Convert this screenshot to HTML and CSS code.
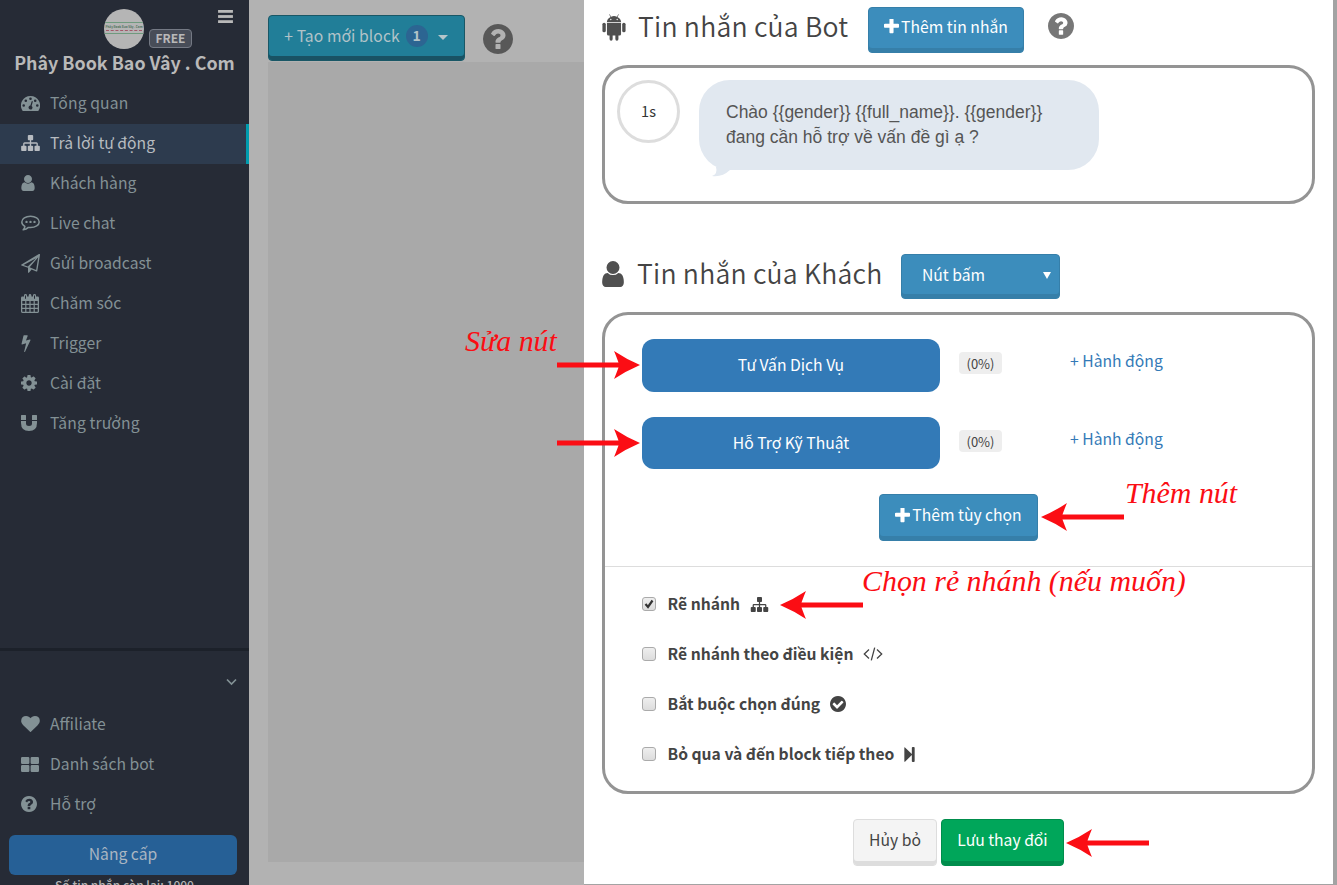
FILE: index.html
```html
<!DOCTYPE html>
<html lang="vi">
<head>
<meta charset="utf-8">
<title>Phây Book Bao Vây . Com</title>
<link rel="stylesheet" href="styles.css">
</head>
<body>
<svg class="defs" width="0" height="0">
  <symbol id="user" viewBox="256 128 1280 1536"><path d="M1536 1399q0 109-62.500 187t-150.500 78h-854q-88 0-150.500-78t-62.500-187q0-85 8.500-160.500t31.500-152 58.500-131 94-89 134.500-34.500q131 128 313 128t313-128q76 0 134.500 34.500t94 89 58.500 131 31.500 152 8.500 160.500zm-256-887q0 159-112.500 271.500t-271.500 112.500-271.500-112.500-112.500-271.500 112.500-271.500 271.500-112.500 271.500 112.500 112.500 271.500z"/></symbol>
  <symbol id="sitemap" viewBox="0 128 1792 1536"><path d="M1792 1248v320q0 40-28 68t-68 28h-320q-40 0-68-28t-28-68v-320q0-40 28-68t68-28h96v-192h-512v192h96q40 0 68 28t28 68v320q0 40-28 68t-68 28h-320q-40 0-68-28t-28-68v-320q0-40 28-68t68-28h96v-192h-512v192h96q40 0 68 28t28 68v320q0 40-28 68t-68 28h-320q-40 0-68-28t-28-68v-320q0-40 28-68t68-28h96v-192q0-52 38-90t90-38h512v-192h-96q-40 0-68-28t-28-68v-320q0-40 28-68t68-28h320q40 0 68 28t28 68v320q0 40-28 68t-68 28h-96v192h512q52 0 90 38t38 90v192h96q40 0 68 28t28 68z"/></symbol>
  <symbol id="heart" viewBox="0 128 1792 1536"><path d="M896 1664q-26 0-44-18l-624-602q-10-8-27.500-26t-55.500-65.500-68-97.500-53.500-121-23.500-138q0-220 127-344t351-124q62 0 126.500 21.500t120 58 95.500 68.500 76 68q36-36 76-68t95.500-68.500 120-58 126.500-21.500q224 0 351 124t127 344q0 221-229 450l-623 600q-18 18-44 18z"/></symbol>
  <symbol id="question" viewBox="128 128 1536 1536"><path d="M1024 1376v-192q0-14-9-23t-23-9h-192q-14 0-23 9t-9 23v192q0 14 9 23t23 9h192q14 0 23-9t9-23zm256-672q0-88-55.500-163t-138.500-116-170-41q-243 0-371 213-15 24 8 42l132 100q7 6 19 6 16 0 25-12 53-68 86-92 34-24 86-24 48 0 85.500 26t37.500 59q0 38-20 61t-68 45q-63 28-115.500 86.500t-52.500 125.500v36q0 14 9 23t23 9h192q14 0 23-9t9-23q0-19 21.500-49.500t54.500-49.500q32-18 49-28.500t46-35 44.500-48 28-60.500 12.500-81zm384 192q0 209-103 385.500t-279.500 279.500-385.500 103-385.500-103-279.500-279.500-103-385.500 103-385.500 279.500-279.500 385.500-103 385.500 103 279.500 279.500 103 385.500z"/></symbol>
  <symbol id="check" viewBox="128 128 1536 1536"><path d="M1412 734q0-28-18-46l-91-90q-19-19-45-19t-45 19l-408 407-226-226q-19-19-45-19t-45 19l-91 90q-18 18-18 46 0 27 18 45l362 362q19 19 45 19 27 0 46-19l543-543q18-18 18-45zm252 162q0 209-103 385.500t-279.500 279.500-385.500 103-385.500-103-279.500-279.500-103-385.500 103-385.500 279.500-279.500 385.500-103 385.500 103 279.500 279.500 103 385.500z"/></symbol>
  <symbol id="cog" viewBox="128 128 1536 1536"><path d="M1152 896q0-106-75-181t-181-75-181 75-75 181 75 181 181 75 181-75 75-181zm512-109v222q0 12-8 23t-20 13l-185 28q-19 54-39 91 35 50 107 138 10 12 10 25t-9 23q-27 37-99 108t-94 71q-12 0-26-9l-138-108q-44 23-91 38-16 136-29 186-7 28-36 28h-222q-14 0-24.500-8.500t-11.500-21.500l-28-184q-49-16-90-37l-141 107q-10 9-25 9-14 0-25-11-126-114-165-168-7-10-7-23 0-12 8-23 15-21 51-66.500t54-70.500q-27-50-41-99l-183-27q-13-2-21-12.500t-8-23.500v-222q0-12 8-23t19-13l186-28q14-46 39-92-40-57-107-138-10-12-10-24 0-10 9-23 26-36 98.500-107.500t94.500-71.500q13 0 26 10l138 107q44-23 91-38 16-136 29-186 7-28 36-28h222q14 0 24.500 8.500t11.500 21.500l28 184q49 16 90 37l142-107q9-9 24-9 13 0 25 10 129 119 165 170 7 8 7 22 0 12-8 23-15 21-51 66.500t-54 70.500q26 50 41 98l183 28q13 2 21 12.500t8 23.500z"/></symbol>
  <symbol id="plus" viewBox="192 192 1408 1408"><path d="M1600 736v192q0 40-28 68t-68 28h-416v416q0 40-28 68t-68 28h-192q-40 0-68-28t-28-68v-416h-416q-40 0-68-28t-28-68v-192q0-40 28-68t68-28h416v-416q0-40 28-68t68-28h192q40 0 68 28t28 68v416h416q40 0 68 28t28 68z"/></symbol>
  <symbol id="bolt" viewBox="448 0 896 1792"><path d="M1333 566q18 20 7 44l-540 1157q-13 25-42 25-4 0-14-2-17-5-25.500-19t-4.500-30l197-808-406 101q-4 1-12 1-18 0-31-11-18-15-13-39l201-825q4-14 16-23t28-9h328q19 0 32 12.500t13 29.500q0 8-5 18l-171 463 396-98q8-2 12-2 19 0 34 15z"/></symbol>
  <symbol id="gauge" viewBox="0 0 19 15"><path fill-rule="evenodd" d="M9.500 0A9.500 9.500 0 0 0 1.400 14.500q.3.500.9.500h14.400q.6 0 .9-.5A9.500 9.500 0 0 0 9.500 0zM2.700 8.200a1.300 1.300 0 1 0 0 2.600 1.300 1.300 0 0 0 0-2.600zM4.800 3.500a1.300 1.300 0 1 0 0 2.600 1.300 1.300 0 0 0 0-2.600zM9.500 1.500a1.300 1.300 0 1 0 0 2.600 1.300 1.300 0 0 0 0-2.600zM14.200 3.500a1.300 1.300 0 1 0 0 2.600 1.300 1.300 0 0 0 0-2.600zM16.300 8.200a1.300 1.300 0 1 0 0 2.600 1.300 1.300 0 0 0 0-2.600zM10.600 5.400l-1.200 4.200a2 2 0 1 0 1.200.3l1.200-4.100q0-.8-.6-.9-.4 0-.6.500z"/></symbol>
  <symbol id="comment" viewBox="0 0 19 16"><path fill="none" stroke="currentColor" stroke-width="1.500" stroke-linejoin="round" d="M9.500 1.200c4.900 0 8.700 2.500 8.700 5.700s-3.800 5.700-8.700 5.700q-1.100 0-2.100-.2Q5.300 14.300 2.200 14.800q1.600-1.500 1.700-3.500C2 10.200.8 8.700.8 6.900c0-3.200 3.800-5.700 8.700-5.700z"/><circle cx="5.500" cy="6.900" r="1.200"/><circle cx="9.500" cy="6.900" r="1.200"/><circle cx="13.500" cy="6.900" r="1.200"/></symbol>
  <symbol id="plane" viewBox="0 0 19 19"><path fill-rule="evenodd" d="M18.700.1q.4.300.3.800l-2.700 16q-.2.800-1 .5l-4.700-1.900-2.500 3.100q-.3.400-.7.200-.4-.1-.4-.6v-4.400L.5 11.600q-.9-.5 0-1.200L17.900.1q.4-.2.800 0zM2.600 10.900l4.200 1.700 8.300-8.300zM15.100 15.900L17.200 3.300 8.600 13.200z"/></symbol>
  <symbol id="calendar" viewBox="0 0 18 19"><path fill-rule="evenodd" d="M1.300 2.600H3V1.400Q3 0 4.500 0T6 1.400v1.200h1.700V1.400Q7.700 0 9 0t1.400 1.400v1.200H12V1.400Q12 0 13.500 0T15 1.400v1.200h1.700Q18 2.600 18 4v13.600q0 1.400-1.300 1.400H1.300Q0 19 0 17.600V4q0-1.400 1.300-1.400zM4 1.500v3.300h1V1.500zm9 0v3.300h1V1.500zM1.300 7v2.800h2.900V7zm4.100 0v2.800h3V7zm4.200 0v2.800h3V7zm4.200 0v2.800h2.900V7zM1.300 11v2.800h2.900V11zm4.100 0v2.800h3V11zm4.200 0v2.800h3V11zm4.200 0v2.800h2.900V11zM1.300 15v2.800h2.900V15zm4.100 0v2.800h3V15zm4.200 0v2.800h3V15zm4.200 0v2.800h2.900V15z"/></symbol>
  <symbol id="magnet" viewBox="0 0 16 16"><path d="M0 6h5v2.500Q5 11 8 11t3-2.500V6h5v2q0 8-8 8T0 8zM.6 0h3.800q.6 0 .6.600V5H0V.6Q0 0 .6 0zM11.600 0h3.800q.6 0 .6.600V5h-5V.6q0-.6.600-.6z"/></symbol>
  <symbol id="tiles" viewBox="0 0 18 15"><path d="M1.200 0h6q1.200 0 1.200 1.200v4.600Q8.400 7 7.200 7h-6Q0 7 0 5.800V1.200Q0 0 1.200 0zM10.800 0h6Q18 0 18 1.200v4.600Q18 7 16.800 7h-6Q9.600 7 9.600 5.800V1.200q0-1.200 1.200-1.200zM1.200 8h6q1.200 0 1.200 1.200v4.600q0 1.200-1.200 1.200h-6Q0 15 0 13.800V9.200Q0 8 1.200 8zM10.800 8h6Q18 8 18 9.200v4.600q0 1.200-1.200 1.200h-6q-1.200 0-1.200-1.200V9.200Q9.600 8 10.800 8z"/></symbol>
  <symbol id="android" viewBox="0 0 24 28"><path fill-rule="evenodd" d="M4.600 8.500C4.800 6 6.200 4.200 8.400 3.100L7 .6q0-.4.500-.3l1.500 2.500q3-1.200 6 0L16.500.3q.5-.1.500.3l-1.400 2.500c2.200 1.100 3.600 2.900 3.800 5.400zM8.700 5a.7.700 0 1 0 0 1.400.7.700 0 0 0 0-1.400zm6.600 0a.7.700 0 1 0 0 1.400.7.700 0 0 0 0-1.400zM4.700 9.300h14.600v11.500q0 1.600-1.600 1.600h-1.100V26q0 1.700-1.600 1.700T13.400 26v-3.600h-2.800V26q0 1.700-1.600 1.700T7.400 26v-3.600H6.300q-1.600 0-1.600-1.600z"/><rect x="0" y="9" width="3.500" height="10" rx="1.700"/><rect x="20.500" y="9" width="3.500" height="10" rx="1.700"/></symbol>
  <symbol id="code" viewBox="0 0 20 14"><path fill="none" stroke="currentColor" stroke-width="1.300" d="M6 2.500L1.300 7 6 11.500M14 2.500L18.700 7 14 11.500M11.700.7L8.300 13.300"/></symbol>
  <symbol id="step" viewBox="0 0 11 16"><path d="M0 .6Q0-.2.700.4L8 7.400V.8Q8 0 9 0h1q1 0 1 .8v14.400q0 .8-1 .8H9q-1 0-1-.8V8.600L.7 15.600q-.7.600-.7-.2z"/></symbol>
  <symbol id="arrow" viewBox="0 0 83 28"><path d="M0 14Q14 8 26 0Q25 2 21.500 11.500H83V16.500H21.500Q25 26 26 28Q14 20 0 14Z"/></symbol>
</svg>

<div class="app">
  <aside class="sidebar">
    <header class="brand">
      <svg class="menu" viewBox="0 0 16 14"><rect width="16" height="3"/><rect y="5.500" width="16" height="3"/><rect y="11" width="16" height="3"/></svg>
      <div class="brand-top">
        <div class="avatar"><i class="rule"></i><b class="a1">Phây Book Bao Vây . Com</b><i class="dots"></i><i class="rule"></i></div>
        <span class="plan">FREE</span>
      </div>
      <div class="brand-name">Phây Book Bao Vây . Com</div>
    </header>
    <nav class="nav">
      <a class="item"><span class="ico"><svg width="19" height="15"><use href="#gauge"/></svg></span><span class="w1">Tổng quan</span></a>
      <a class="item active"><span class="ico"><svg width="19" height="16"><use href="#sitemap"/></svg></span><span>Trả lời tự động</span></a>
      <a class="item"><span class="ico"><svg width="14" height="16"><use href="#user"/></svg></span><span>Khách hàng</span></a>
      <a class="item"><span class="ico"><svg width="19" height="16"><use href="#comment"/></svg></span><span>Live chat</span></a>
      <a class="item"><span class="ico"><svg width="19" height="19"><use href="#plane"/></svg></span><span>Gửi broadcast</span></a>
      <a class="item"><span class="ico"><svg width="18" height="19"><use href="#calendar"/></svg></span><span>Chăm sóc</span></a>
      <a class="item"><span class="ico"><svg width="10" height="18"><use href="#bolt"/></svg></span><span>Trigger</span></a>
      <a class="item"><span class="ico"><svg width="16" height="16"><use href="#cog"/></svg></span><span>Cài đặt</span></a>
      <a class="item"><span class="ico"><svg width="16" height="16"><use href="#magnet"/></svg></span><span class="w1">Tăng trưởng</span></a>
    </nav>
    <div class="support">
      <div class="collapse"><svg width="11" height="8" viewBox="0 0 11 8"><path d="M1 1.500L5.500 6L10 1.500"/></svg></div>
      <a class="item"><span class="ico"><svg width="19" height="16"><use href="#heart"/></svg></span><span>Affiliate</span></a>
      <a class="item"><span class="ico"><svg width="18" height="15"><use href="#tiles"/></svg></span><span>Danh sách bot</span></a>
      <a class="item"><span class="ico"><svg width="16" height="16"><use href="#question"/></svg></span><span>Hỗ trợ</span></a>
      <button class="upgrade">Nâng cấp</button>
      <div class="quota">Số tin nhắn còn lại: 1000</div>
    </div>
  </aside>

  <main class="board">
    <div class="toolbar">
      <button class="btn new-block"><span>+ Tạo mới block</span><span class="count">1</span><i class="caret"></i></button>
      <svg class="help" width="30" height="30"><use href="#question"/></svg>
    </div>
    <div class="canvas"></div>
  </main>

  <section class="modal">
    <div class="heading">
      <svg class="h-ico" width="24" height="27"><use href="#android"/></svg>
      <h2 class="t-bot">Tin nhắn của Bot</h2>
      <button class="btn blue add-msg"><svg width="15" height="15"><use href="#plus"/></svg><span>Thêm tin nhắn</span></button>
      <svg class="help2" width="26" height="26"><use href="#question"/></svg>
    </div>
    <div class="box bot">
      <div class="delay">1s</div>
      <div class="bubble">Chào {{gender}} {{full_name}}. {{gender}}<br>đang cần hỗ trợ về vấn đề gì ạ ?
        <svg class="tail" width="20" height="11" viewBox="0 0 20 11"><path d="M4 0Q6 7 0 9Q10 10.500 18 3L20 0Z"/></svg>
      </div>
    </div>
    <div class="heading guest-head">
      <svg class="h-ico" width="22" height="26"><use href="#user"/></svg>
      <h2 class="t-guest">Tin nhắn của Khách</h2>
      <button class="btn blue select"><span>Nút bấm</span><i class="tri"></i></button>
    </div>
    <div class="box guest">
      <div class="choices">
        <div class="choice"><button class="answer">Tư Vấn Dịch Vụ</button><span class="pct">(0%)</span><a class="act">+ Hành động</a></div>
        <div class="choice"><button class="answer">Hỗ Trợ Kỹ Thuật</button><span class="pct">(0%)</span><a class="act">+ Hành động</a></div>
        <button class="btn blue add-opt"><svg width="15" height="15"><use href="#plus"/></svg><span>Thêm tùy chọn</span></button>
      </div>
      <div class="options">
        <label class="opt"><span class="cb"><svg width="10" height="10" viewBox="0 0 10 10"><path d="M1.500 5L4 8L8.500 1.500"/></svg></span><span>Rẽ nhánh</span><svg width="19" height="15"><use href="#sitemap"/></svg></label>
        <label class="opt"><span class="cb"></span><span>Rẽ nhánh theo điều kiện</span><svg width="20" height="14"><use href="#code"/></svg></label>
        <label class="opt"><span class="cb"></span><span>Bắt buộc chọn đúng</span><svg width="16" height="16"><use href="#check"/></svg></label>
        <label class="opt"><span class="cb"></span><span>Bỏ qua và đến block tiếp theo</span><svg width="11" height="15"><use href="#step"/></svg></label>
      </div>
    </div>
    <div class="footer">
      <button class="btn cancel">Hủy bỏ</button>
      <button class="btn save">Lưu thay đổi</button>
    </div>
  </section>
</div>

<div class="notes">
  <span class="note n1">Sửa nút</span>
  <span class="note n2">Thêm nút</span>
  <span class="note n3">Chọn rẻ nhánh (nếu muốn)</span>
  <svg class="arrow right r1"><use href="#arrow"/></svg>
  <svg class="arrow right r2"><use href="#arrow"/></svg>
  <svg class="arrow r3"><use href="#arrow"/></svg>
  <svg class="arrow r4"><use href="#arrow"/></svg>
  <svg class="arrow r5"><use href="#arrow"/></svg>
</div>
</body>
</html>
```

FILE: styles.css
```css
* { box-sizing: border-box; }
body {
  margin: 0;
  height: 885px;
  overflow: hidden;
  font-family: "Noto Sans CJK SC", "Noto Sans", sans-serif;
  font-size: 15.7px;
  line-height: 24px;
  color: #444;
}
.defs { position: absolute; }
svg { fill: currentColor; display: block; flex: none; }
button { font: inherit; border: 0; padding: 0; }
span, h2, .brand-name, .quota { white-space: nowrap; }

.app { display: flex; height: 885px; background: #a3a3a3; }

/* Sidebar */
.sidebar {
  width: 249px;
  height: 885px;
  display: flex;
  flex-direction: column;
  background: #262b36;
  color: #839195;
  overflow: hidden;
  flex: none;
}
.brand { position: relative; height: 83px; padding-top: 9px; color: #b9b9b9; }
.menu { position: absolute; left: 217px; top: 10px; width: 17px; height: 13px; }
.brand-top { display: flex; padding-left: 104px; gap: 5px; height: 40px; }
.avatar {
  width: 40px; height: 40px; border-radius: 50%; background: #b5b5b5;
  overflow: hidden; display: flex; flex-direction: column; align-items: center; padding-top: 12px;
}
.rule { width: 40px; height: 1px; background: #6f9a7e; margin: 1px 0 2px; }
.a1 { font-size: 3px; line-height: 5px; color: #4c7059; white-space: nowrap; }
.dots { width: 36px; height: 0; border-top: 1px dashed #a2596a; margin-bottom: 1px; }
.plan {
  align-self: flex-end; margin-bottom: 1px; width: 43px; height: 19px; line-height: 15px;
  border: 1px solid #747984; border-radius: 4px; background: #484d58;
  font-size: 12px; font-weight: 700; text-align: center;
}
.brand-name { font-size: 17.850px; font-weight: 700; line-height: 27px; text-align: center; }
.item { display: flex; align-items: center; height: 40px; padding-left: 21px; }
.w1 { letter-spacing: .12px; }
.item.active { position: relative; background: #2d3b4e; color: #b7bbc0; border-right: 3px solid #009cae; top: 1px; padding-bottom: 2px; }
.ico { width: 29px; flex: none; }
.support { margin-top: auto; height: 237px; border-top: 3px solid #1c212a; flex: none; }
.collapse { height: 53px; padding: 27px 0 0 226px; }
.collapse path { fill: none; stroke: currentColor; stroke-width: 1.700; }
.upgrade {
  display: block; width: 228px; height: 40px; margin: 11px 0 0 9px; padding-bottom: 2px;
  border-radius: 6px; background: #266096; color: #aab6c2;
}
.quota { font-size: 12px; line-height: 20px; text-align: center; font-weight: 500; color: #b4b4b4; }

/* Board behind the dialog */
.board { width: 335px; flex: none; background: #b2b2b2; padding: 15px 0 23px 19px; display: flex; flex-direction: column; }
.toolbar { display: flex; gap: 18px; height: 47px; }
.canvas { flex: 1; background: #a9a9a9; }
.btn {
  display: flex; align-items: center; justify-content: center;
  border-radius: 4px; border: 1px solid transparent; padding-bottom: 5px; flex: none;
}
.new-block {
  width: 197px; height: 46px; background: #217e98; color: #b2c3c8;
  border-color: #195766; box-shadow: inset 0 -4px 0 #195264;
}
.new-block > span:first-child { margin-left: -1px; letter-spacing: .07px; }
.count {
  width: 22px; height: 22px; border-radius: 50%; background: #2c6592; margin-left: 6px;
  line-height: 21px; font-size: 14px; font-weight: 700;
}
.caret { margin: 3px 0 0 10px; border: 5px solid transparent; border-top-color: #b5c5ca; border-bottom: 0; }
.help { margin-top: 9px; color: #585858; }

/* Dialog */
.modal { width: 749px; height: 884px; flex: none; background: #fff; padding: 7px 18px 0; }
.heading { display: flex; height: 46px; }
.h-ico { margin-top: 7px; color: #505050; }
h2 { margin: 0; font-size: 26.600px; font-weight: 350; line-height: 38px; color: #444; letter-spacing: .22px; }
.t-bot { width: 229px; padding-left: 12px; margin-right: 13px; }
.blue { background: #3c8dbc; border-color: #367fa9; color: #fff; box-shadow: inset 0 -4px 0 #367fa9; gap: 2px; }
.add-msg { width: 156px; height: 46px; padding-bottom: 7px; }
.add-msg span { letter-spacing: .04px; }
.help2 { margin: 6px 0 0 24px; color: #777; }
.box { width: 713px; border: 3px solid #949494; border-radius: 26px; background: #fff; }
.bot { height: 139px; margin-top: 12px; display: flex; padding: 12px; }
.delay {
  width: 63px; height: 63px; border-radius: 50%; border: 3px solid #ddd;
  text-align: center; line-height: 56px; font-size: 14.500px; color: #333;
}
.bubble {
  position: relative; width: 400px; height: 90px; margin-left: 19px; padding: 20px 27px;
  background: #e1e8f0; border-radius: 31px; font: 17.500px/25px "Liberation Sans", sans-serif; color: #555; white-space: nowrap;
}
.tail { position: absolute; left: 13px; top: 87px; color: #e1e8f0; }
.guest-head { margin-top: 50px; }
.t-guest { width: 264px; padding-left: 13px; margin-right: 13px; }
.select { width: 159px; height: 45px; justify-content: space-between; padding: 0 8px 3px 20px; }
.tri { border: 4px solid transparent; border-top: 7px solid #fff; border-bottom: 0; }
.guest { height: 482px; margin-top: 12px; }
.choices { height: 252px; padding: 24px 37px 0; border-bottom: 1px solid #ddd; display: flex; flex-direction: column; }
.choice { display: flex; height: 53px; margin-bottom: 25px; }
.answer { width: 298px; height: 53px; padding-bottom: 1px; border-radius: 12px; background: #337ab7; color: #fff; }
.choice + .choice .answer { height: 52px; padding: 0; }
.pct {
  width: 43px; height: 22px; margin: 13px 0 0 19px; border-radius: 4px; background: #eee;
  font-size: 13px; line-height: 23px; text-align: center;
}
.act { margin: 10px 0 0 68px; color: #337ab7; white-space: nowrap; }
.add-opt { width: 159px; height: 47px; margin: -1px 0 0 237px; }
.options { padding: 12px 37px 0; }
.opt { display: flex; align-items: center; height: 50px; font-size: 15.660px; font-weight: 700; }
.opt > svg { margin-left: 10px; }
.cb {
  width: 14px; height: 14px; margin-right: 11.500px; border: 1px solid #aaa; border-radius: 3px;
  background: linear-gradient(#eee, #dcdcdc); padding: 1px;
}
.cb path { fill: none; stroke: #333; stroke-width: 2.200; }
.footer { display: flex; gap: 4px; padding-left: 251px; margin-top: 25px; }
.cancel { width: 84px; height: 47px; background: #f4f4f4; border-color: #ddd; box-shadow: inset 0 -4px 0 #ddd; color: #444; }
.save { width: 123px; height: 47px; background: #00a65a; border-color: #008d4c; box-shadow: inset 0 -4px 0 #008d4c; color: #fff; }

/* Hand-placed annotations over the screen */
.note { position: absolute; color: #fb0d14; font: italic 29.900px/34px "Liberation Serif", serif; white-space: nowrap; }
.n1 { left: 465px; top: 324px; }
.n2 { left: 1125px; top: 476px; }
.n3 { left: 862px; top: 564px; }
.arrow { position: absolute; width: 83px; height: 28px; color: #fb0d14; }
.right { transform: scaleX(-1); }
.r1 { left: 557px; top: 351px; }
.r2 { left: 557px; top: 429px; }
.r3 { left: 1041px; top: 503px; }
.r4 { left: 780px; top: 591px; }
.r5 { left: 1066px; top: 829px; }
```
